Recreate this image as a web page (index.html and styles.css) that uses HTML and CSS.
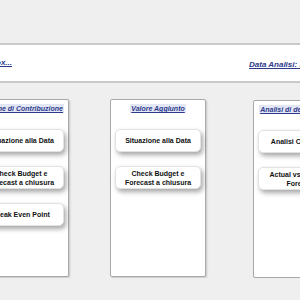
FILE: index.html
```html
<!DOCTYPE html>
<html>
<head>
<meta charset="utf-8">
<link rel="stylesheet" href="styles.css">
</head>
<body>
<div class="page">
  <div class="header">
    <div class="header-left"><a class="head-link">Riepilogo Indici Box...</a></div>
    <div class="header-right"><a class="head-link">Data Analisi: 31/12/2023</a></div>
  </div>
  <div class="panels">
    <div class="panel">
      <div class="panel-title"><span>Margine di Contribuzione</span></div>
      <div class="btn">Situazione alla Data</div>
      <div class="btn">Check Budget e<br>Forecast a chiusura</div>
      <div class="btn">Break Even Point</div>
    </div>
    <div class="panel">
      <div class="panel-title"><span>Valore Aggiunto</span></div>
      <div class="btn">Situazione alla Data</div>
      <div class="btn">Check Budget e<br>Forecast a chiusura</div>
    </div>
    <div class="panel panel-far">
      <div class="panel-title"><span>Analisi di dettaglio Costi</span></div>
      <div class="btn">Analisi Costi Fissi</div>
      <div class="btn">Actual vs Budget e<br>Forecast</div>
    </div>
  </div>
</div>
</body>
</html>
```
FILE: styles.css
```css
html, body {
  margin: 0;
  padding: 0;
  background: #efefef;
  overflow: hidden;
  font-family: "Liberation Sans", Arial, sans-serif;
}
.page {
  padding-top: 43px;
  width: 300px;
}
.header {
  height: 36px;
  background: #ffffff;
  border-top: 2px solid #c9c9c9;
  border-bottom: 2px solid #c9c9c9;
  display: flex;
  align-items: center;
  justify-content: space-between;
}
.header-left {
  width: 12px;
  display: flex;
  justify-content: flex-end;
  white-space: nowrap;
  margin-top: -2px;
}
.header-right {
  width: 51px;
  white-space: nowrap;
  margin-top: -3px;
}
.head-link {
  font-size: 8px;
  font-weight: bold;
  font-style: italic;
  color: #2d3a8c;
  text-decoration: underline;
}
.panels {
  display: flex;
  gap: 41px;
  margin-left: -27px;
  margin-top: 16px;
}
.panel {
  flex: 0 0 96px;
  height: 178px;
  box-sizing: border-box;
  background: #ffffff;
  border: 1px solid #a9a9a9;
  border-radius: 2px;
  box-shadow: 1px 1px 2px rgba(0, 0, 0, 0.18);
  display: flex;
  flex-direction: column;
  align-items: center;
  padding-top: 3px;
  gap: 14px;
}
.panel-far {
  margin-left: 6px;
  margin-top: 1px;
}
.panel-title {
  height: 9px;
  line-height: 9px;
  font-size: 7px;
  font-weight: bold;
  font-style: italic;
  white-space: nowrap;
  color: #2d3a8c;
  margin-top: 1px;
  margin-bottom: 2px;
}
.panel-title span {
  text-decoration: underline;
  background: #e3e7f5;
  padding: 1px 1px;
}
.btn {
  width: 86px;
  height: 23px;
  box-sizing: border-box;
  background: #ffffff;
  border: 1px solid #e2e2e2;
  border-radius: 5px;
  box-shadow: 2px 3px 5px rgba(0, 0, 0, 0.35);
  display: flex;
  align-items: center;
  justify-content: center;
  text-align: center;
  font-size: 7px;
  line-height: 9px;
  font-weight: bold;
  color: #111111;
  white-space: nowrap;
}
```
